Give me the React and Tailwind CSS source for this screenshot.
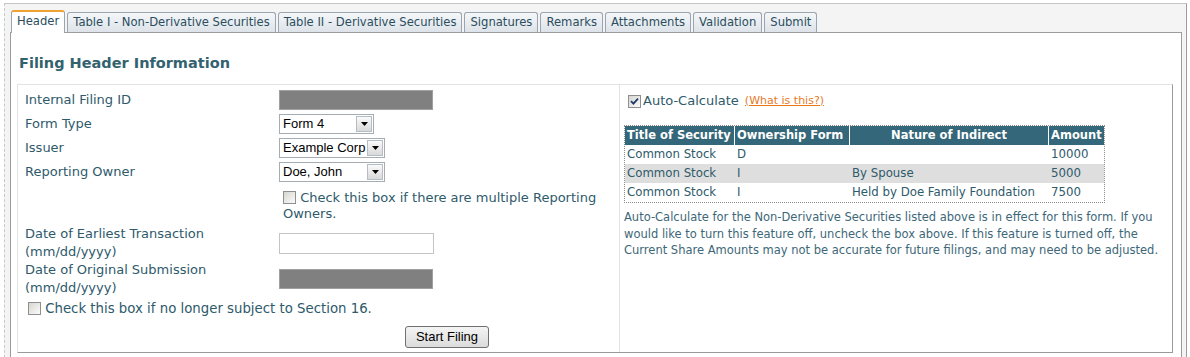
import { useState } from 'react';

// Tabs across the top of the filing screen
const tabs = [
  'Header',
  'Table I - Non-Derivative Securities',
  'Table II - Derivative Securities',
  'Signatures',
  'Remarks',
  'Attachments',
  'Validation',
  'Submit',
];

// Holdings shown in the auto-calculate table
const holdings = [
  { title: 'Common Stock', form: 'D', nature: '', amount: '10000' },
  { title: 'Common Stock', form: 'I', nature: 'By Spouse', amount: '5000' },
  { title: 'Common Stock', form: 'I', nature: 'Held by Doe Family Foundation', amount: '7500' },
];

// Old-style checkbox
function Checkbox({ checked, onChange }) {
  return (
    <span
      onClick={onChange}
      className="inline-flex h-[13px] w-[13px] shrink-0 cursor-pointer items-center justify-center border border-[#8f8f8f] bg-gradient-to-br from-[#d6d6d0] to-[#fbfbfb] align-[-2px]"
    >
      {checked && (
        <svg width="9" height="9" viewBox="0 0 9 9">
          <path d="M1 4.2 L3.4 6.6 L8 1.6" fill="none" stroke="#1f3b6e" strokeWidth="1.8" />
        </svg>
      )}
    </span>
  );
}

// Select box with the little arrow button
function Select({ value, width }) {
  return (
    <div className={`flex h-[20px] items-center border border-[#a5acb2] bg-white ${width}`}>
      <span className="flex-1 overflow-hidden whitespace-nowrap pl-[3px] font-['Liberation_Sans',sans-serif] text-[13px] leading-[18px] text-black">
        {value}
      </span>
      <span className="mr-px flex h-[16px] w-[16px] items-center justify-center border border-[#b5bcc4] bg-gradient-to-b from-[#fafafa] to-[#d9d9d9]">
        <svg width="7" height="4" viewBox="0 0 7 4">
          <path d="M0 0 H7 L3.5 4 Z" fill="#000" />
        </svg>
      </span>
    </div>
  );
}

// One label / field row of the left form
function Row({ label, children }) {
  return (
    <div className="flex h-[24px] items-center">
      <div className="w-[254px]">{label}</div>
      <div>{children}</div>
    </div>
  );
}

export default function App() {
  const [activeTab, setActiveTab] = useState('Header');
  const [multiOwners, setMultiOwners] = useState(false);
  const [noLonger, setNoLonger] = useState(false);
  const [autoCalc, setAutoCalc] = useState(true);

  return (
    <div className="h-[357px] overflow-hidden bg-white pt-[3px] font-['DejaVu_Sans',sans-serif]">
      <div className="ml-[4px] h-[360px] w-[1183px] border-t border-l border-r border-t-[#c6c6c6] border-l-[#c8c8c8] border-r-[#9c9c9c] bg-[#f4f4f4] pt-[5px] pr-[4px] pl-[5px] [border-left-style:dashed]">
        {/* Tab bar */}
        <div className="flex h-[23px] items-end gap-[2px] pl-px">
          {tabs.map((tab) => (
            <div
              key={tab}
              onClick={() => setActiveTab(tab)}
              className={`cursor-pointer whitespace-nowrap rounded-t-[3px] border border-b-0 px-[5px] text-[11.6px] text-[#2b4d5e] ${
                activeTab === tab
                  ? 'relative z-10 -mb-px h-[23px] border-[#9aa5b0] border-t-2 border-t-[#f0a22e] bg-white leading-[19px]'
                  : 'h-[20px] border-[#9aa5b0] bg-gradient-to-b from-[#f5f7f9] to-[#dde3e9] leading-[19px]'
              }`}
            >
              {tab}
            </div>
          ))}
        </div>

        {/* Content box */}
        <div className="h-[400px] border border-[#9c9c9c] bg-white pt-[21px]">
          <h1 className="ml-[8px] text-[14.5px] leading-[18px] font-bold text-[#33626f]">Filing Header Information</h1>

          <div className="mt-[12px] ml-[6px] flex h-[269px] w-[1156px] border border-[#e3e3e3] border-r-[#9a9a9a] border-b-[#9a9a9a] text-[13px] text-[#2e5a6b]">
            {/* Left column: header fields */}
            <div className="w-[601px] pt-[3px] pl-[7px]">
              <Row label="Internal Filing ID">
                <div className="h-[20px] w-[154px] border border-[#a0a0a0] bg-[#808080]" />
              </Row>
              <Row label="Form Type">
                <Select value="Form 4" width="w-[95px]" />
              </Row>
              <Row label="Issuer">
                <Select value="Example Corp" width="w-[106px]" />
              </Row>
              <Row label="Reporting Owner">
                <Select value="Doe, John" width="w-[106px]" />
              </Row>

              <div className="ml-[254px] w-[340px] pt-[6px] pl-[4px] leading-[16px]">
                <Checkbox checked={multiOwners} onChange={() => setMultiOwners(!multiOwners)} /> Check this box if there are multiple Reporting Owners.
              </div>

              <div className="mt-[3px] flex items-center leading-[18px]">
                <div className="w-[254px]">
                  Date of Earliest Transaction
                  <br />
                  (mm/dd/yyyy)
                </div>
                <div className="h-[21px] w-[155px] border border-[#c4c4c4] bg-white" />
              </div>
              <div className="flex items-center leading-[18px]">
                <div className="w-[254px]">
                  Date of Original Submission
                  <br />
                  (mm/dd/yyyy)
                </div>
                <div className="h-[20px] w-[154px] border border-[#a0a0a0] bg-[#808080]" />
              </div>

              <div className="mt-[3px] pl-[3px] text-[13.3px] leading-[18px]">
                <Checkbox checked={noLonger} onChange={() => setNoLonger(!noLonger)} /> Check this box if no longer subject to Section 16.
              </div>

              <div className="mt-[8px] ml-[254px] flex w-[340px] justify-center">
                <button className="-ml-[4px] h-[22px] rounded-[3px] border border-[#707070] bg-gradient-to-b from-[#f4f4f4] to-[#dcdcdc] px-[10px] font-['Liberation_Sans',sans-serif] text-[13px] text-black">
                  Start Filing
                </button>
              </div>
            </div>

            {/* Right column: auto-calculate */}
            <div className="flex-1 border-l border-[#e3e3e3] pt-[7px] pl-[4px]">
              <div className="flex h-[18px] items-center gap-[2px] pl-[4px]">
                <Checkbox checked={autoCalc} onChange={() => setAutoCalc(!autoCalc)} />
                <span>Auto-Calculate</span>
                <span className="ml-[4px] cursor-pointer text-[11px] text-[#e8791f] underline">(What is this?)</span>
              </div>

              <table className="mt-[15px] border-separate border-spacing-0 border border-dotted border-[#8c8c8c] text-[11.75px]">
                <thead>
                  <tr className="h-[19px] bg-[#35677a] text-[11.5px] text-white">
                    <th className="w-[110px] border-r border-white px-[2px] text-left font-bold whitespace-nowrap">Title of Security</th>
                    <th className="w-[115px] border-r border-white px-[2px] text-left font-bold whitespace-nowrap">Ownership Form</th>
                    <th className="w-[199px] border-r border-white px-[2px] text-center font-bold whitespace-nowrap">Nature of Indirect</th>
                    <th className="w-[54px] px-[2px] text-left font-bold whitespace-nowrap">Amount</th>
                  </tr>
                </thead>
                <tbody>
                  {holdings.map((h, i) => (
                    <tr key={i} className={`h-[19px] ${i === 1 ? 'bg-[#dedede]' : 'bg-white'}`}>
                      <td className="px-[2px] whitespace-nowrap">{h.title}</td>
                      <td className="px-[2px]">{h.form}</td>
                      <td className="px-[2px] whitespace-nowrap">{h.nature}</td>
                      <td className="px-[2px]">{h.amount}</td>
                    </tr>
                  ))}
                </tbody>
              </table>

              <p className="mt-[6px] text-[11.5px] leading-[16.5px] text-[#3d6778]">
                Auto-Calculate for the Non-Derivative Securities listed above is in effect for this form. If you
                <br />
                would like to turn this feature off, uncheck the box above. If this feature is turned off, the
                <br />
                Current Share Amounts may not be accurate for future filings, and may need to be adjusted.
              </p>
            </div>
          </div>
        </div>
      </div>
    </div>
  );
}
